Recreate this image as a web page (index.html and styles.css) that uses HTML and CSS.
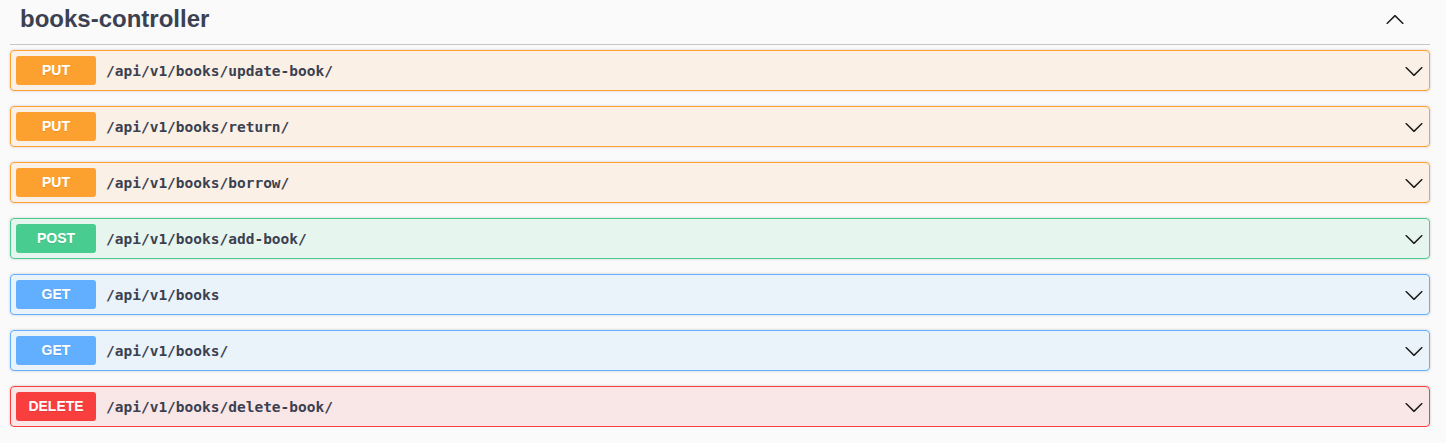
FILE: index.html
```html
<!DOCTYPE html>
<html lang="en">
<head>
<meta charset="utf-8">
<title>books-controller</title>
<link rel="stylesheet" href="styles.css">
</head>
<body>
<section class="tag-section">
  <div class="tag-header">
    <h3 class="tag-title">books-controller</h3>
    <svg class="arrow-up" width="20" height="20" viewBox="0 0 20 20" aria-hidden="true"><path d="M17.418 14.908c.272.268.709.268.979 0s.271-.701 0-.969l-7.908-7.83c-.27-.268-.707-.268-.979 0l-7.908 7.83c-.27.268-.27.701 0 .969.271.268.709.268.979 0L10 7.767l7.418 7.141z"/></svg>
  </div>
  <div class="ops">
    <div class="opblock put"><span class="method">PUT</span><span class="path">/api/v1/books/update-book/</span><svg class="arrow" width="20" height="20" viewBox="0 0 20 20" aria-hidden="true"><path d="M17.418 6.109c.272-.268.709-.268.979 0s.271.701 0 .969l-7.908 7.83c-.27.268-.707.268-.979 0l-7.908-7.83c-.27-.268-.27-.701 0-.969.271-.268.709-.268.979 0L10 13.25l7.418-7.141z"/></svg></div>
    <div class="opblock put"><span class="method">PUT</span><span class="path">/api/v1/books/return/</span><svg class="arrow" width="20" height="20" viewBox="0 0 20 20" aria-hidden="true"><path d="M17.418 6.109c.272-.268.709-.268.979 0s.271.701 0 .969l-7.908 7.83c-.27.268-.707.268-.979 0l-7.908-7.83c-.27-.268-.27-.701 0-.969.271-.268.709-.268.979 0L10 13.25l7.418-7.141z"/></svg></div>
    <div class="opblock put"><span class="method">PUT</span><span class="path">/api/v1/books/borrow/</span><svg class="arrow" width="20" height="20" viewBox="0 0 20 20" aria-hidden="true"><path d="M17.418 6.109c.272-.268.709-.268.979 0s.271.701 0 .969l-7.908 7.83c-.27.268-.707.268-.979 0l-7.908-7.83c-.27-.268-.27-.701 0-.969.271-.268.709-.268.979 0L10 13.25l7.418-7.141z"/></svg></div>
    <div class="opblock post"><span class="method">POST</span><span class="path">/api/v1/books/add-book/</span><svg class="arrow" width="20" height="20" viewBox="0 0 20 20" aria-hidden="true"><path d="M17.418 6.109c.272-.268.709-.268.979 0s.271.701 0 .969l-7.908 7.83c-.27.268-.707.268-.979 0l-7.908-7.83c-.27-.268-.27-.701 0-.969.271-.268.709-.268.979 0L10 13.25l7.418-7.141z"/></svg></div>
    <div class="opblock get"><span class="method">GET</span><span class="path">/api/v1/books</span><svg class="arrow" width="20" height="20" viewBox="0 0 20 20" aria-hidden="true"><path d="M17.418 6.109c.272-.268.709-.268.979 0s.271.701 0 .969l-7.908 7.83c-.27.268-.707.268-.979 0l-7.908-7.83c-.27-.268-.27-.701 0-.969.271-.268.709-.268.979 0L10 13.25l7.418-7.141z"/></svg></div>
    <div class="opblock get"><span class="method">GET</span><span class="path">/api/v1/books/</span><svg class="arrow" width="20" height="20" viewBox="0 0 20 20" aria-hidden="true"><path d="M17.418 6.109c.272-.268.709-.268.979 0s.271.701 0 .969l-7.908 7.83c-.27.268-.707.268-.979 0l-7.908-7.83c-.27-.268-.27-.701 0-.969.271-.268.709-.268.979 0L10 13.25l7.418-7.141z"/></svg></div>
    <div class="opblock delete"><span class="method">DELETE</span><span class="path">/api/v1/books/delete-book/</span><svg class="arrow" width="20" height="20" viewBox="0 0 20 20" aria-hidden="true"><path d="M17.418 6.109c.272-.268.709-.268.979 0s.271.701 0 .969l-7.908 7.83c-.27.268-.707.268-.979 0l-7.908-7.83c-.27-.268-.27-.701 0-.969.271-.268.709-.268.979 0L10 13.25l7.418-7.141z"/></svg></div>
  </div>
</section>
</body>
</html>
```

FILE: styles.css
```css
html, body {
  margin: 0;
  padding: 0;
  background: #fafafa;
}

body {
  font-family: "Liberation Sans", Arial, sans-serif;
  color: #3b4151;
}

.tag-section {
  width: 1420px;
  margin-left: 10px;
}

.tag-header {
  display: flex;
  align-items: center;
  height: 38px;
  padding: 0 25px 6px 10px;
  border-bottom: 1px solid #c4c6cb;
  margin-bottom: 5px;
}

.tag-title {
  flex: 1;
  margin: 0;
  font-size: 24px;
  line-height: 28px;
  font-weight: 700;
  color: #3b4151;
}

.arrow-up {
  display: block;
  fill: #1a1a1a;
}

.ops {
  display: flex;
  flex-direction: column;
  gap: 15px;
}

.opblock {
  display: flex;
  align-items: center;
  padding: 5px;
  border: 1px solid;
  border-radius: 4px;
  box-shadow: 0 0 3px rgba(0, 0, 0, 0.19);
}

.method {
  width: 80px;
  padding: 6px 0;
  border-radius: 3px;
  font-size: 14px;
  line-height: 17px;
  font-weight: 700;
  text-align: center;
  color: #fff;
  text-shadow: 0 1px 0 rgba(0, 0, 0, 0.1);
}

.path {
  flex: 1;
  padding: 0 10px;
  font-family: "DejaVu Sans Mono", "Liberation Mono", monospace;
  font-size: 14.5px;
  font-weight: 700;
  color: #3b4151;
}

.arrow {
  display: block;
  fill: #1a1a1a;
}

.put { border-color: #fca130; background: rgba(252, 161, 48, 0.1); }
.put .method { background: #fca130; }

.post { border-color: #49cc90; background: rgba(73, 204, 144, 0.1); }
.post .method { background: #49cc90; }

.get { border-color: #61affe; background: rgba(97, 175, 254, 0.1); }
.get .method { background: #61affe; }

.delete { border-color: #f93e3e; background: rgba(249, 62, 62, 0.1); }
.delete .method { background: #f93e3e; }
```
